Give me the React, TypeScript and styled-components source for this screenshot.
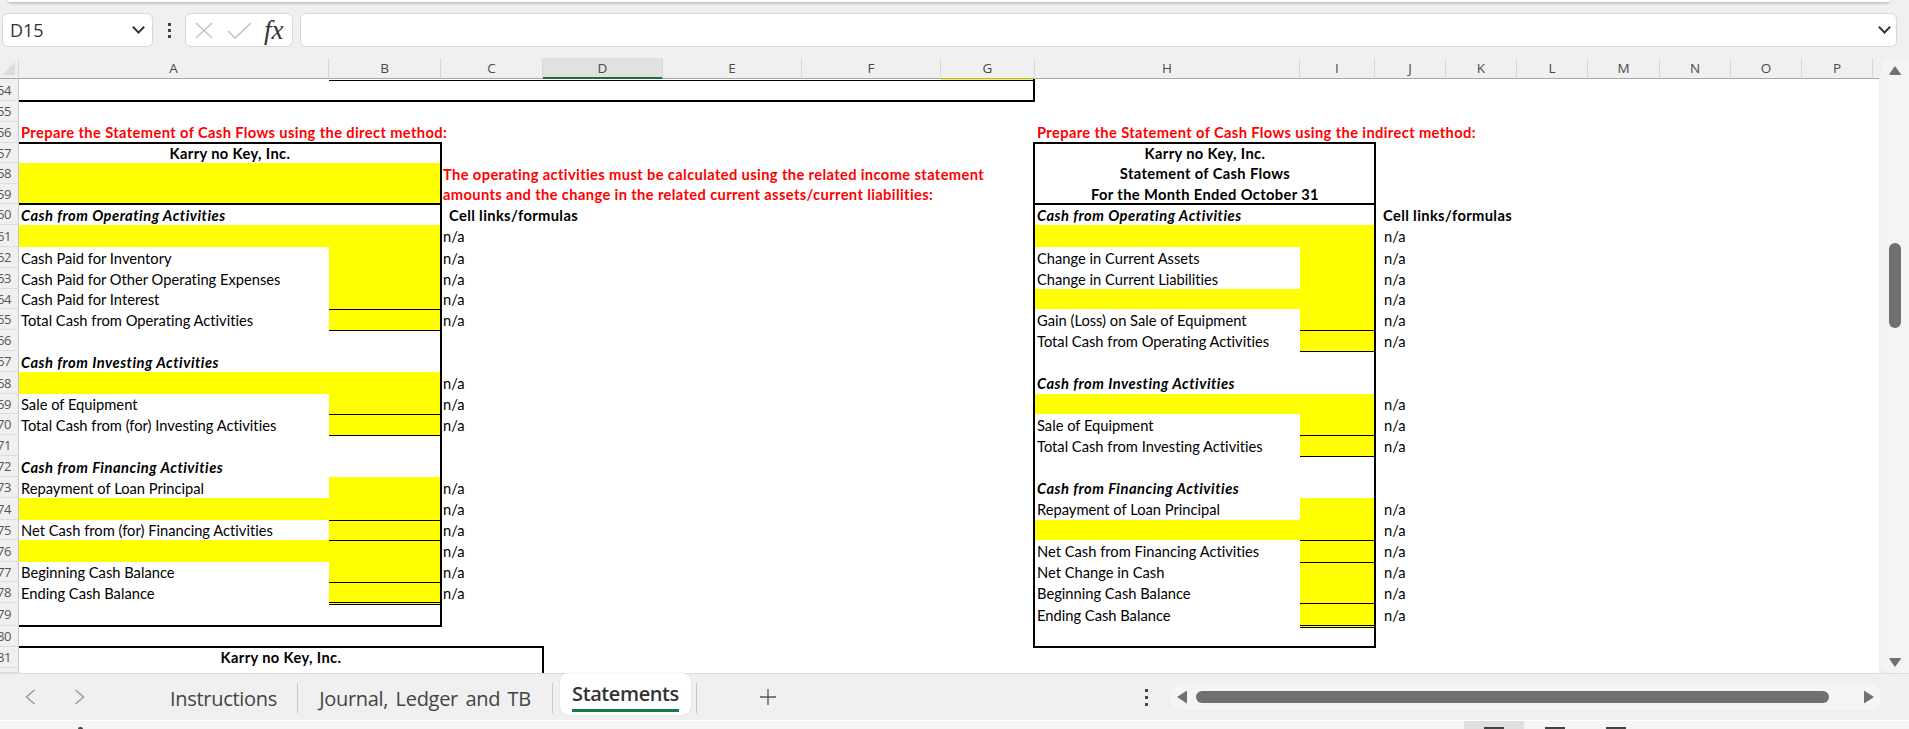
import React from 'react';
import styled, { createGlobalStyle } from 'styled-components';

const COLUMNS = ['A', 'B', 'C', 'D', 'E', 'F', 'G', 'H', 'I', 'J', 'K', 'L', 'M', 'N', 'O', 'P'];
const COLUMN_WIDTHS = [310, 112, 102, 120, 139, 139, 94, 265, 75, 71, 71, 71, 72, 71, 71, 71];
const FIRST_ROW = 54;
const ROW_HEIGHTS = [22, 21, 21, 20, 21, 20, 21, 22, 21, 21, 20, 21, 21, 21, 22, 20, 21, 21, 21, 21, 22, 20, 22, 20, 21, 23, 21, 21, 5];

// sheet row number -> grid line (grid row 1 is the column header)
const gridRow = (row: number) => row - FIRST_ROW + 2;

interface Line {
  row: number;
  kind: 'head' | 'plain' | 'band' | 'entry';
  label?: string;
  rule?: 'single' | 'double';
}

const directLines: Line[] = [
  { row: 60, kind: 'head', label: 'Cash from Operating Activities' },
  { row: 61, kind: 'band' },
  { row: 62, kind: 'entry', label: 'Cash Paid for Inventory' },
  { row: 63, kind: 'entry', label: 'Cash Paid for Other Operating Expenses' },
  { row: 64, kind: 'entry', label: 'Cash Paid for Interest', rule: 'single' },
  { row: 65, kind: 'entry', label: 'Total Cash from Operating Activities', rule: 'single' },
  { row: 67, kind: 'head', label: 'Cash from Investing Activities' },
  { row: 68, kind: 'band' },
  { row: 69, kind: 'entry', label: 'Sale of Equipment', rule: 'single' },
  { row: 70, kind: 'entry', label: 'Total Cash from (for) Investing Activities', rule: 'single' },
  { row: 72, kind: 'head', label: 'Cash from Financing Activities' },
  { row: 73, kind: 'entry', label: 'Repayment of Loan Principal' },
  { row: 74, kind: 'band', rule: 'single' },
  { row: 75, kind: 'entry', label: 'Net Cash from (for) Financing Activities', rule: 'single' },
  { row: 76, kind: 'band' },
  { row: 77, kind: 'entry', label: 'Beginning Cash Balance', rule: 'single' },
  { row: 78, kind: 'entry', label: 'Ending Cash Balance', rule: 'double' },
];

const indirectLines: Line[] = [
  { row: 60, kind: 'head', label: 'Cash from Operating Activities' },
  { row: 61, kind: 'band' },
  { row: 62, kind: 'entry', label: 'Change in Current Assets' },
  { row: 63, kind: 'entry', label: 'Change in Current Liabilities' },
  { row: 64, kind: 'band' },
  { row: 65, kind: 'entry', label: 'Gain (Loss) on Sale of Equipment', rule: 'single' },
  { row: 66, kind: 'entry', label: 'Total Cash from Operating Activities', rule: 'single' },
  { row: 68, kind: 'head', label: 'Cash from Investing Activities' },
  { row: 69, kind: 'band' },
  { row: 70, kind: 'entry', label: 'Sale of Equipment', rule: 'single' },
  { row: 71, kind: 'entry', label: 'Total Cash from Investing Activities', rule: 'single' },
  { row: 73, kind: 'head', label: 'Cash from Financing Activities' },
  { row: 74, kind: 'entry', label: 'Repayment of Loan Principal' },
  { row: 75, kind: 'band', rule: 'single' },
  { row: 76, kind: 'entry', label: 'Net Cash from Financing Activities', rule: 'single' },
  { row: 77, kind: 'entry', label: 'Net Change in Cash' },
  { row: 78, kind: 'entry', label: 'Beginning Cash Balance', rule: 'single' },
  { row: 79, kind: 'entry', label: 'Ending Cash Balance', rule: 'double' },
];

const Statement = ({ lines, col, indent }: { lines: Line[]; col: number; indent: number }) => (
  <>
    {lines.map(line => (
      <React.Fragment key={line.row}>
        <Cell
          $col={col}
          $row={line.row}
          $fill={line.kind === 'band'}
          $weight={line.kind === 'head' ? 'head' : 'plain'}
        >
          {line.label}
        </Cell>
        {line.kind !== 'head' && <Amount $col={col + 1} $row={line.row} $rule={line.rule} />}
        {line.kind !== 'head' && <Cell $col={col + 2} $row={line.row} $indent={indent}>n/a</Cell>}
      </React.Fragment>
    ))}
  </>
);

const App = () => (
  <Page>
    <GlobalStyle />
    <WindowEdge />
    <FormulaBar>
      <NameBox>
        D15
        <Chevron />
      </NameBox>
      <Grip><i /><i /><i /></Grip>
      <FormulaActions>
        <svg width="18" height="17" viewBox="0 0 18 17">
          <path d="M1 1 L17 16 M17 1 L1 16" stroke="#c4c4c4" strokeWidth="1.6" fill="none" />
        </svg>
        <svg width="25" height="17" viewBox="0 0 25 17">
          <path d="M1 9 L8 16 L24 1" stroke="#c4c4c4" strokeWidth="1.6" fill="none" />
        </svg>
        <FxLabel>fx</FxLabel>
      </FormulaActions>
      <FormulaInput>
        <Chevron />
      </FormulaInput>
    </FormulaBar>

    <SheetArea>
      <Sheet>
        <Corner><span /></Corner>
        {COLUMNS.map((name, i) => (
          <ColumnHeader key={name} $col={i + 2} $active={name === 'D'}>{name}</ColumnHeader>
        ))}
        <ColumnFiller />
        {ROW_HEIGHTS.slice(0, -1).map((_, i) => (
          <RowHeader key={i} $row={FIRST_ROW + i}>{FIRST_ROW + i}</RowHeader>
        ))}
        <RowHeader $row={82} />

        <TopRule />
        <GoldSliver />
        <Frame $from={2} $to={9} $rowFrom={54} $rowTo={55} $open="top" />

        <Cell $col={2} $row={56} $weight="note" $lift>Prepare the Statement of Cash Flows using the direct method:</Cell>
        <Title $col={2} $span={2} $row={57}>Karry no Key, Inc.</Title>
        <Band $col={2} $span={2} $row={58} $rows={2} />
        <Frame $from={2} $to={4} $rowFrom={57} $rowTo={60} />
        <Frame $from={2} $to={4} $rowFrom={57} $rowTo={80} />
        <Statement lines={directLines} col={2} indent={0} />

        <Cell $col={4} $row={58} $weight="note">The operating activities must be calculated using the related income statement</Cell>
        <Cell $col={4} $row={59} $weight="note">amounts and the change in the related current assets/current liabilities:</Cell>
        <Cell $col={4} $row={60} $weight="bold" $indent={6}>Cell links/formulas</Cell>

        <Cell $col={9} $row={56} $weight="note" $lift>Prepare the Statement of Cash Flows using the indirect method:</Cell>
        <Title $col={9} $span={2} $row={57}>Karry no Key, Inc.</Title>
        <Title $col={9} $span={2} $row={58}>Statement of Cash Flows</Title>
        <Title $col={9} $span={2} $row={59}>For the Month Ended October 31</Title>
        <Frame $from={9} $to={11} $rowFrom={57} $rowTo={60} />
        <Frame $from={9} $to={11} $rowFrom={57} $rowTo={81} />
        <Statement lines={indirectLines} col={9} indent={7} />
        <Cell $col={11} $row={60} $weight="bold" $indent={6}>Cell links/formulas</Cell>

        <Title $col={2} $span={3} $row={81}>Karry no Key, Inc.</Title>
        <Frame $from={2} $to={5} $rowFrom={81} $rowTo={83} $open="bottom" />
      </Sheet>
      <VerticalScroll>
        <ArrowUp />
        <VerticalThumb />
        <ArrowDown />
      </VerticalScroll>
    </SheetArea>

    <TabBar>
      <NavButtons>
        <svg width="11" height="16" viewBox="0 0 11 16">
          <path d="M9.5 1 L1.5 8 L9.5 15" stroke="#9a9a9a" strokeWidth="1.5" fill="none" />
        </svg>
        <svg width="11" height="16" viewBox="0 0 11 16">
          <path d="M1.5 1 L9.5 8 L1.5 15" stroke="#9a9a9a" strokeWidth="1.5" fill="none" />
        </svg>
      </NavButtons>
      <Tab $width={148}>Instructions</Tab>
      <Tab $width={255}>Journal, Ledger and TB</Tab>
      <ActiveTab><span>Statements</span></ActiveTab>
      <TabDivider />
      <AddTab>
        <svg width="16" height="16" viewBox="0 0 16 16">
          <path d="M8 0 V16 M0 8 H16" stroke="#555" strokeWidth="1.3" fill="none" />
        </svg>
      </AddTab>
      <Grip $small><i /><i /><i /></Grip>
      <HorizontalScroll>
        <ArrowLeft />
        <HorizontalThumb />
        <ArrowRight />
      </HorizontalScroll>
    </TabBar>

    <StatusBar>
      <StatusMark />
      <ViewButton $active><span /></ViewButton>
      <ViewButton><span /></ViewButton>
      <ViewButton><span /></ViewButton>
    </StatusBar>
  </Page>
);

const GlobalStyle = createGlobalStyle`
  html, body {
    margin: 0;
    height: 100%;
    overflow: hidden;
    background: #f0f0f0;
  }
`;

const Page = styled.div`
  display: flex;
  flex-direction: column;
  width: 1909px;
  height: 729px;
  overflow: hidden;
  background: #f0f0f0;
  font-family: Lato, "Liberation Sans", sans-serif;
`;

const WindowEdge = styled.div`
  flex: none;
  height: 2px;
  margin: 0 19px 0 8px;
  background: #fff;
  box-shadow: 0 1px 3px rgba(0, 0, 0, 0.35);
  border-radius: 0 0 6px 6px;
`;

const FormulaBar = styled.div`
  flex: none;
  display: flex;
  align-items: stretch;
  height: 34px;
  margin-top: 11px;
  padding: 0 12px 0 2px;
`;

const Chevron = styled.span`
  width: 7px;
  height: 7px;
  margin-top: -5px;
  border-right: 2px solid #333;
  border-bottom: 2px solid #333;
  transform: rotate(45deg);
`;

const NameBox = styled.div`
  display: flex;
  align-items: center;
  justify-content: space-between;
  width: 151px;
  box-sizing: border-box;
  padding: 0 9px 0 7px;
  background: #fff;
  border: 1px solid #d8d8d8;
  border-radius: 6px;
  font: 18px "Open Sans", sans-serif;
  color: #333;
`;

const Grip = styled.div<{ $small?: boolean }>`
  display: flex;
  flex-direction: column;
  justify-content: center;
  gap: ${p => (p.$small ? 4 : 3)}px;
  width: ${p => (p.$small ? 'auto' : '32px')};
  align-items: center;

  i {
    display: block;
    width: 3px;
    height: 3px;
    background: #444;
  }
`;

const FormulaActions = styled.div`
  display: flex;
  align-items: center;
  width: 108px;
  box-sizing: border-box;
  padding-left: 9px;
  gap: 14px;
  background: #fff;
  border: 1px solid #d8d8d8;
  border-radius: 6px;
`;

const FxLabel = styled.span`
  font: italic 27px "Liberation Serif", serif;
  color: #333;
  margin-left: -2px;
`;

const FormulaInput = styled.div`
  flex: 1;
  display: flex;
  align-items: center;
  justify-content: flex-end;
  margin-left: 7px;
  padding-right: 7px;
  background: #fff;
  border: 1px solid #d8d8d8;
  border-radius: 6px;
`;

const SheetArea = styled.div`
  flex: none;
  display: flex;
  height: 615px;
  margin-top: 11px;
`;

const Sheet = styled.div`
  flex: none;
  display: grid;
  width: 1879px;
  grid-template-columns: 19px ${COLUMN_WIDTHS.map(w => `${w}px`).join(' ')} 1fr;
  grid-template-rows: 21px ${ROW_HEIGHTS.map(h => `${h}px`).join(' ')};
  overflow: hidden;
  background: #fff;
  font-size: 14.7px;
  font-variant-ligatures: none;
  line-height: 1;
  color: #000;
`;

const Corner = styled.div`
  grid-column: 1;
  grid-row: 1;
  z-index: 201;
  background: #f0f0f0;
  border-bottom: 1px solid #a8a8a8;
  border-right: 1px solid #d8d8d8;

  span {
    display: block;
    width: 13px;
    height: 13px;
    margin: 4px 0 0 2px;
    background: #dcdcdc;
    clip-path: polygon(100% 0, 100% 100%, 0 100%);
  }
`;

const ColumnHeader = styled.div<{ $col: number; $active?: boolean }>`
  grid-column: ${p => p.$col};
  grid-row: 1;
  z-index: 201;
  display: flex;
  align-items: center;
  justify-content: center;
  box-sizing: border-box;
  background: ${p => (p.$active ? '#e1e1e1' : '#f0f0f0')};
  border-right: 1px solid #d8d8d8;
  border-bottom: ${p => (p.$active ? '2px solid #1d6f42' : '1px solid #a8a8a8')};
  font: 13.5px "Open Sans", sans-serif;
  color: #4a4a4a;
`;

const ColumnFiller = styled.div`
  grid-column: 18;
  grid-row: 1;
  background: #f0f0f0;
  border-bottom: 1px solid #a8a8a8;
`;

const RowHeader = styled.div<{ $row: number }>`
  grid-column: 1;
  grid-row: ${p => gridRow(p.$row)};
  z-index: 201;
  display: flex;
  align-items: center;
  justify-content: flex-end;
  box-sizing: border-box;
  padding-right: 7px;
  overflow: hidden;
  background: #f0f0f0;
  border-right: 1px solid #c8c8c8;
  border-bottom: 1px solid #dcdcdc;
  font: 13px "Open Sans", sans-serif;
  letter-spacing: -0.4px;
  color: #555;
`;

const CELL_SPACING = { plain: 0, bold: 0.37, head: 0.5, note: 0.37 };

const Cell = styled.div<{
  $col: number;
  $row: number;
  $fill?: boolean;
  $indent?: number;
  $lift?: boolean;
  $weight?: 'plain' | 'bold' | 'head' | 'note';
}>`
  grid-column: ${p => p.$col};
  grid-row: ${p => gridRow(p.$row)};
  display: flex;
  align-items: center;
  padding: ${p => (p.$lift ? 0 : 1)}px 0 ${p => (p.$lift ? 1 : 0)}px ${p => 2 + (p.$indent ?? 0)}px;
  white-space: nowrap;
  min-width: 0;
  background: ${p => (p.$fill ? '#ffff00' : 'transparent')};
  font-weight: ${p => (p.$weight && p.$weight !== 'plain' ? 700 : 400)};
  font-style: ${p => (p.$weight === 'head' ? 'italic' : 'normal')};
  letter-spacing: ${p => CELL_SPACING[p.$weight ?? 'plain']}px;
  color: ${p => (p.$weight === 'note' ? '#ff0000' : '#000')};
`;

// rules hang 1px into the next row, so upper rows have to paint over lower ones
const Amount = styled.div<{ $col: number; $row: number; $rule?: 'single' | 'double' }>`
  grid-column: ${p => p.$col};
  grid-row: ${p => gridRow(p.$row)};
  z-index: ${p => 100 - p.$row + FIRST_ROW};
  background: #ffff00;
  margin-bottom: ${p => (p.$rule === 'double' ? -2 : p.$rule ? -1 : 0)}px;
  border-bottom: ${p => (p.$rule === 'double' ? '3px double #000' : p.$rule ? '1px solid #000' : 'none')};
`;

const Title = styled.div<{ $col: number; $span: number; $row: number }>`
  grid-column: ${p => p.$col} / span ${p => p.$span};
  grid-row: ${p => gridRow(p.$row)};
  display: flex;
  align-items: center;
  justify-content: center;
  font-weight: 700;
  letter-spacing: 0.37px;
`;

const Band = styled.div<{ $col: number; $span: number; $row: number; $rows: number }>`
  grid-column: ${p => p.$col} / span ${p => p.$span};
  grid-row: ${p => gridRow(p.$row)} / span ${p => p.$rows};
  background: #ffff00;
`;

const Frame = styled.div<{
  $from: number;
  $to: number;
  $rowFrom: number;
  $rowTo: number;
  $open?: 'top' | 'bottom';
}>`
  grid-column: ${p => p.$from} / ${p => p.$to};
  grid-row: ${p => gridRow(p.$rowFrom)} / ${p => gridRow(p.$rowTo)};
  z-index: 200;
  margin: ${p => (p.$open === 'top' ? 0 : -1)}px ${p => (p.$open === 'top' ? 0 : -1)}px ${p => (p.$open === 'bottom' ? 0 : -1)}px -2px;
  border: 2px solid #000;
  ${p => (p.$open ? `border-${p.$open}: none;` : '')}
`;

const TopRule = styled.div`
  grid-column: 3 / 9;
  grid-row: ${gridRow(54)};
  align-self: start;
  margin-top: 1px;
  height: 1px;
  background: #000;
`;

const GoldSliver = styled.div`
  grid-column: 8;
  grid-row: ${gridRow(54)};
  align-self: start;
  height: 1px;
  background: #ffff00;
`;

const VerticalScroll = styled.div`
  flex: 1;
  display: flex;
  flex-direction: column;
  align-items: center;
  margin-left: 2px;
  background: #f4f4f4;
  border-radius: 13px 0 0 13px;
`;

const ArrowUp = styled.span`
  margin-top: 8px;
  width: 13px;
  height: 9px;
  background: #707070;
  clip-path: polygon(50% 0, 100% 100%, 0 100%);
  border-radius: 2px;
`;

const ArrowDown = styled(ArrowUp)`
  margin-top: 330px;
  clip-path: polygon(0 0, 100% 0, 50% 100%);
`;

const VerticalThumb = styled.span`
  width: 12px;
  height: 85px;
  margin-top: 168px;
  background: #707070;
  border-radius: 6px;
`;

const TabBar = styled.div`
  flex: none;
  display: flex;
  align-items: stretch;
  height: 46px;
  padding-left: 25px;
  border-top: 1px solid #dcdcdc;
`;

const NavButtons = styled.div`
  display: flex;
  align-items: center;
  gap: 38px;
  width: 125px;
`;

const Tab = styled.div<{ $width: number }>`
  display: flex;
  align-items: center;
  justify-content: center;
  box-sizing: border-box;
  width: ${p => p.$width}px;
  margin: 9px 0 7px;
  border-right: 1px solid #c8c8c8;
  font: 20px "Open Sans", sans-serif;
  letter-spacing: -0.3px;
  word-spacing: 2.5px;
  color: #444;
`;

const ActiveTab = styled.div`
  display: flex;
  justify-content: center;
  width: 131px;
  height: 42px;
  margin-left: 7px;
  margin-top: -1px;
  background: #fff;
  border-radius: 8px;
  box-shadow: 0 0 1px rgba(0, 0, 0, 0.25);

  span {
    height: 26px;
    margin-top: 9px;
    padding: 0 0 1px;
    border-bottom: 3px solid #107c41;
    font: 600 20px "Open Sans", sans-serif;
    letter-spacing: -0.4px;
    line-height: 24px;
    color: #333;
  }
`;

const TabDivider = styled.div`
  width: 1px;
  margin: 9px 0 7px 5px;
  background: #c8c8c8;
`;

const AddTab = styled.div`
  display: flex;
  align-items: center;
  margin-left: 63px;
  margin-right: 369px;
`;

const HorizontalScroll = styled.div`
  display: flex;
  align-items: center;
  width: 711px;
  height: 26px;
  align-self: center;
  margin-left: 22px;
  padding-left: 7px;
  box-sizing: border-box;
  background: #f5f5f5;
  border-radius: 13px;
`;

const ArrowLeft = styled.span`
  width: 10px;
  height: 13px;
  background: #707070;
  clip-path: polygon(0 50%, 100% 0, 100% 100%);
`;

const ArrowRight = styled.span`
  width: 10px;
  height: 13px;
  margin-left: 35px;
  background: #707070;
  clip-path: polygon(0 0, 100% 50%, 0 100%);
`;

const HorizontalThumb = styled.span`
  width: 633px;
  height: 12px;
  margin-left: 9px;
  background: #707070;
  border-radius: 6px;
`;

const StatusBar = styled.div`
  flex: none;
  position: relative;
  display: flex;
  justify-content: flex-end;
  height: 8px;
  padding-right: 263px;
  background: #f5f5f5;
  border-top: 1px solid #fff;
`;

const StatusMark = styled.span`
  position: absolute;
  left: 78px;
  top: 6px;
  width: 5px;
  height: 2px;
  background: #444;
  border-radius: 2px 2px 0 0;
`;

const ViewButton = styled.div<{ $active?: boolean }>`
  display: flex;
  justify-content: center;
  width: 60px;
  margin-left: 1px;
  background: ${p => (p.$active ? '#e0e0e0' : 'transparent')};

  span {
    width: 20px;
    height: 2px;
    margin-top: 6px;
    background: #444;
  }
`;

export default App;
